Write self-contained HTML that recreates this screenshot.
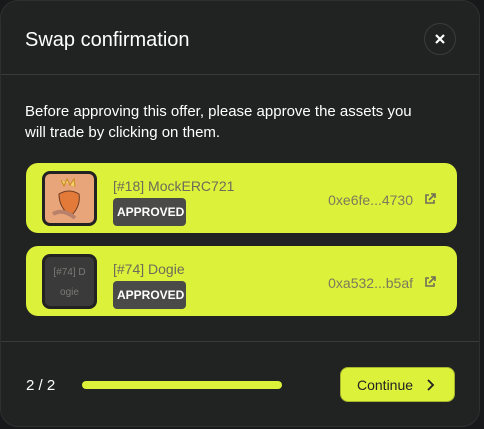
<!DOCTYPE html>
<html><head><style>
*{margin:0;padding:0;box-sizing:border-box}
body{width:484px;height:429px;background:#18191a;font-family:"Liberation Sans",sans-serif;position:relative;overflow:hidden}
.m{position:absolute;left:0;top:0;width:480px;height:427px;background:#212322;border:1px solid #2e302f;border-radius:18px}
.t{position:absolute;left:24px;top:28px;color:#fff;font-size:20px}
.x{position:absolute;left:423px;top:22px;width:32px;height:32px;border:1px solid #3a3c3b;border-radius:50%}
.hl{position:absolute;left:0;right:0;height:1px;background:#393b3a}
.p{position:absolute;left:24px;top:100px;color:#fff;font-size:15px;line-height:21px;width:400px}
.c{position:absolute;left:25px;width:431px;height:70px;background:#dcf13a;border-radius:12px}
.th{position:absolute;left:16px;top:8px;width:55px;height:55px;border:3px solid #222;border-radius:8px;overflow:hidden}
.nm{position:absolute;left:87px;top:15px;color:#6c6c5a;font-size:14px}
.ap{position:absolute;left:87px;top:35px;background:#4a4a48;color:#fff;font-size:12px;font-weight:bold;padding:7px 4px;border-radius:4px;height:28px;width:73px;text-align:center}
.ad{position:absolute;right:44px;top:29px;color:#7a7a5c;font-size:14px}
.ic{position:absolute;right:21px;top:30px}
</style></head><body>
<div class="m">
<div class="t">Swap confirmation</div>
<div class="x"><svg width="30" height="30" viewBox="0 0 30 30"><path d="M11 11L19 19M19 11L11 19" stroke="#fff" stroke-width="2.2"/></svg></div>
<div class="hl" style="top:73px"></div>
<div class="p">Before approving this offer, please approve the assets you will trade by clicking on them.</div>
<div class="c" style="top:162px">
 <div class="th" style="background:#e8a57a"><svg width="49" height="49" viewBox="0 0 49 49"><path d="M16 6l3 6 3-7 3 6 4-6 1 8" stroke="#c98a20" fill="#f2d36a"/><path d="M14 20q10-6 20 0q2 12-8 22q-12-8-12-22z" fill="#e37a3a" stroke="#6a3a20"/><path d="M8 40q10-6 22 4" stroke="#b9806a" stroke-width="4" fill="none"/></svg></div>
 <div class="nm">[#18] MockERC721</div>
 <div class="ap">APPROVED</div>
 <div class="ad">0xe6fe...4730</div>
 <svg class="ic" width="12" height="12" viewBox="0 0 12 12"><path d="M5 2H2v8h8V7M7 1h4v4M11 1L5 7" stroke="#6e6e58" stroke-width="1.6" fill="none"/></svg>
</div>
<div class="c" style="top:245px">
 <div class="th" style="background:#393a39;color:#7a7a76;font-size:10px;text-align:center;line-height:20px;padding-top:6px">[#74] D<br>ogie</div>
 <div class="nm">[#74] Dogie</div>
 <div class="ap">APPROVED</div>
 <div class="ad">0xa532...b5af</div>
 <svg class="ic" width="12" height="12" viewBox="0 0 12 12"><path d="M5 2H2v8h8V7M7 1h4v4M11 1L5 7" stroke="#6e6e58" stroke-width="1.6" fill="none"/></svg>
</div>
<div class="hl" style="top:340px"></div>
<div style="position:absolute;left:25px;top:376px;color:#fff;font-size:15px">2 / 2</div>
<div style="position:absolute;left:81px;top:380px;width:200px;height:8px;background:#dcf13a;border-radius:4px"></div>
<div style="position:absolute;left:339px;top:366px;width:115px;height:35px;background:#dcf13a;border:1px solid #a7b42c;border-radius:8px;color:#222;font-size:14px;padding:9px 0 0 16px">Continue<svg style="position:absolute;left:84px;top:11px" width="10" height="12" viewBox="0 0 10 12"><path d="M3 1l5 5-5 5" stroke="#222" stroke-width="1.8" fill="none"/></svg></div>
</div>
</body></html>
